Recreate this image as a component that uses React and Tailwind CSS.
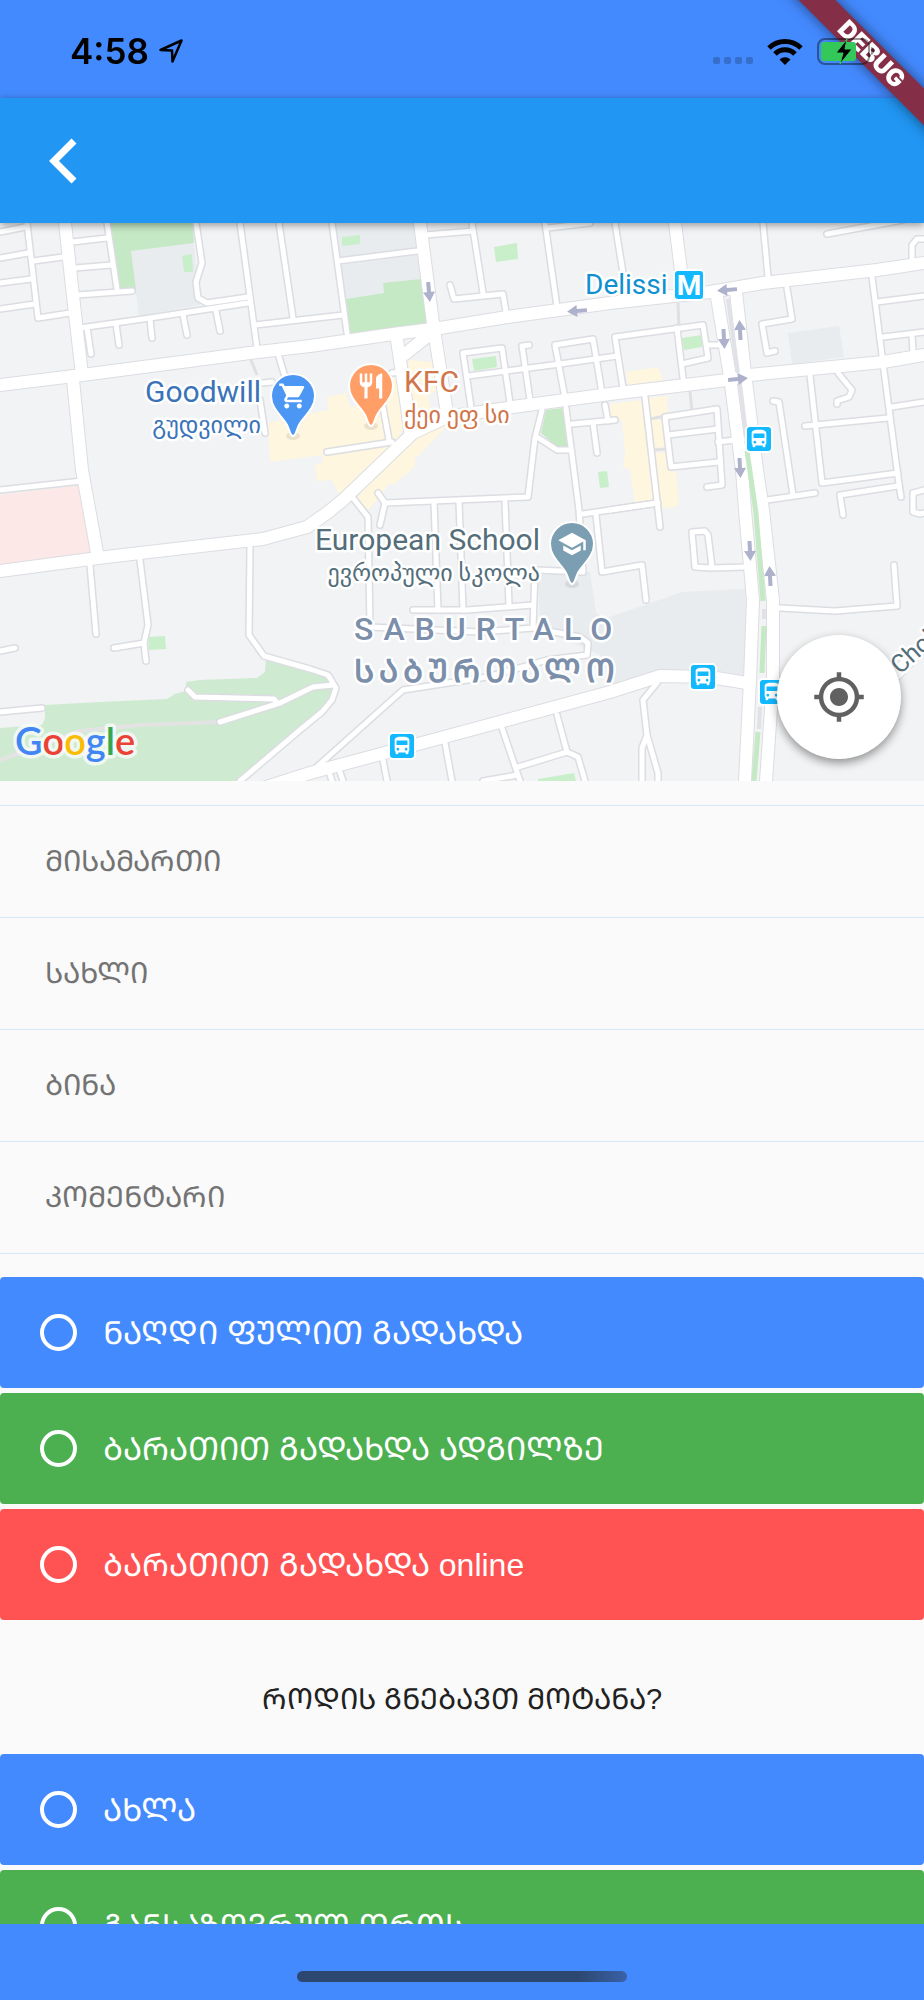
import React, { useState } from "react";
import { MdMyLocation, MdDirectionsBus, MdShoppingCart, MdRestaurant, MdSchool } from "react-icons/md";

const fields = [
  { name: "address", label: "ᲛᲘᲡᲐᲛᲐᲠᲗᲘ" },
  { name: "house", label: "ᲡᲐᲮᲚᲘ" },
  { name: "flat", label: "ᲑᲘᲜᲐ" },
  { name: "comment", label: "ᲙᲝᲛᲔᲜᲢᲐᲠᲘ" },
];

const payments = [
  { value: "cash", label: "ᲜᲐᲦᲓᲘ ᲤᲣᲚᲘᲗ ᲒᲐᲓᲐᲮᲓᲐ", color: "bg-[#448aff]" },
  { value: "card", label: "ᲑᲐᲠᲐᲗᲘᲗ ᲒᲐᲓᲐᲮᲓᲐ ᲐᲓᲒᲘᲚᲖᲔ", color: "bg-[#4caf50]" },
  { value: "online", label: "ᲑᲐᲠᲐᲗᲘᲗ ᲒᲐᲓᲐᲮᲓᲐ online", color: "bg-[#ff5252]" },
];

const times = [
  { value: "now", label: "ᲐᲮᲚᲐ", color: "bg-[#448aff]" },
  { value: "later", label: "ᲒᲐᲜᲡᲐᲖᲦᲕᲠᲣᲚ ᲓᲠᲝᲡ", color: "bg-[#4caf50]" },
];

// Map shapes
const campus = [
  "M131 28 194 20 196 45 200 82 139 93Z",
  "M332 0H417V27L338 37Z",
  "M340 42 418 32 422 56 383 61 384 70 346 76Z",
  "M788 110 839 103 844 134 792 141Z",
  "M538 352 590 349 596 390 602 395 610 394 682 369 745 366 749 452 655 449 612 464 600 432 540 405Z",
];

const parks = [
  "M108 0H193L194 20 131 28 136 67 118 66Z",
  "M346 76 384 70 383 60 421 56 428 101 350 111Z",
  "M546 187 563 185 568 224 557 224 541 210Z",
];

const lawns = [
  "M182 33 192 31 193 49 184 49Z",
  "M342 14 360 12V21L342 23Z",
  "M494 24 517 20 518 36 496 39Z",
  "M472 136 496 133 497 144 474 148Z",
  "M598 249 607 248 609 264 600 265Z",
  "M682 115 702 112V124L684 127Z",
  "M148 414 165 413 166 426 149 427Z",
  "M538 556 574 550 576 558H538Z",
];

const shops = [
  "M268 200 328 187 327 174 346 170 350 184 384 178 390 155 398 155 410 200 350 272 340 274 332 257 317 258 315 242 323 239 322 232 270 239Z",
  "M408 140 410 137 433 139 437 168 428 172 434 200 447 203 415 236 415 244 393 262 389 261 368 288 357 275 412 205Z",
  "M626 149 658 144 663 157 628 162Z",
  "M610 181 641 177 653 279 635 279 630 246 623 245 625 230 622 197 610 194Z",
  "M648 175 667 173 668 190 650 195Z",
  "M651 197 662 197 665 224 653 225Z",
  "M655 230 667 229 670 247 676 249 679 277 677 284 662 285Z",
];

const streets = [
  "M0 9 25 4",
  "M27 0 38 95 70 90",
  "M0 35 28 30",
  "M33 38 63 34",
  "M0 60 31 56",
  "M0 86 35 81",
  "M72 19 107 15",
  "M107 0 117 66",
  "M75 45 112 42",
  "M77 72 132 68",
  "M80 105 150 95 248 80",
  "M87 105 91 131",
  "M116 101 119 122",
  "M150 96 152 115",
  "M183 92 187 112",
  "M216 88 220 108",
  "M196 0 202 40 196 59 198 75 207 80 248 74",
  "M240 0 257 125",
  "M279 0 293 95",
  "M255 102 343 92",
  "M332 0 347 110",
  "M338 38 417 28",
  "M279 134 285 154",
  "M263 160 272 159",
  "M260 177 265 210",
  "M0 267 82 258",
  "M425 12 473 8",
  "M472 0 483 70",
  "M450 62 454 76 503 71 506 89",
  "M545 0 557 84",
  "M548 5 590 0",
  "M471 184 463 130 502 125 510 180",
  "M468 153 560 141 617 133",
  "M529 122 522 123 530 177",
  "M565 175 555 122 593 116 602 170",
  "M542 187 535 215 528 274 385 280 378 270",
  "M537 214 557 227 570 227",
  "M566 185 579 287 583 349 537 347",
  "M572 201 615 197",
  "M593 200 597 230",
  "M605 182 608 198",
  "M383 184 389 217",
  "M392 150 400 149",
  "M327 229 392 219",
  "M353 275 368 294 370 404 480 409 533 405 535 347",
  "M385 280 380 302",
  "M434 279 438 387",
  "M459 279 463 387",
  "M505 279 509 382",
  "M413 387 467 387 533 382",
  "M583 291 657 280",
  "M596 292 602 349 642 342 646 377",
  "M383 537 387 558",
  "M445 520 452 558",
  "M502 505 520 558",
  "M518 544 567 529 557 492",
  "M567 529 578 534 585 558",
  "M483 558 517 552",
  "M330 552 332 558",
  "M340 549 343 558",
  "M615 0 623 50",
  "M827 11 903 -3",
  "M912 35V22L917 16H924",
  "M787 65 792 96 762 101 767 130 775 128",
  "M872 54 883 140 898 254 901 274",
  "M877 79 924 73",
  "M883 114 924 109",
  "M912 112 913 129",
  "M892 184 924 179",
  "M810 152 822 260 898 250",
  "M805 203 888 195",
  "M838 150 852 167 849 174 837 178V181",
  "M773 178 779 179 793 272",
  "M767 277 815 270",
  "M898 263 840 272 843 292",
  "M924 267 913 270 913 289 920 291 924 290",
  "M623 165 615 114 703 102 708 135 682 141",
  "M677 105 683 155",
  "M708 122 720 122",
  "M645 174 660 304",
  "M610 287 658 280",
  "M718 239 671 244 665 194 717 186 722 262 707 264",
  "M668 212 718 206",
  "M718 219 743 216",
  "M763 0 768 54",
  "M90 342 96 411",
  "M140 337 148 402 144 420 146 438",
  "M114 425 144 420",
  "M0 428 15 425",
  "M0 489 42 485",
  "M250 324 249 412 264 433 310 446 328 452 336 465 332 477 322 489 300 507 240 558",
  "M188 467 195 474 274 476 277 480",
  "M220 499 280 480 313 464 333 462",
  "M745 344 712 345 695 344 692 309 705 308 708 312 712 344",
  "M780 385 835 388 897 383 894 342",
  "M657 460 643 477 647 512 642 525V558",
  "M647 512 658 550V558",
  "M310 550 403 467 487 454 547 437 587 432 588 420 580 414 533 405",
];

const avenues = [
  "M0 162 82 152 250 130 310 123 393 111 440 105 507 94 610 80 710 69 763 60 877 47 924 40",
  "M65 0 72 64 82 152",
  "M73 157 82 247 98 335",
  "M0 348 98 335 140 330 263 316 307 304 327 290 343 277 413 210 447 194 513 184 610 171 727 157 750 152 883 139 924 132",
  "M420 0 433 100 447 190",
  "M397 117 407 184 410 208",
  "M405 131 434 108",
  "M717 74 730 154 742 247 745 287 753 377 750 457 745 558",
  "M736 69 745 150 757 247 763 287 773 377 773 457 766 558",
  "M675 0 684 72",
  "M260 566 310 550 433 517 507 497 610 469 660 453 710 454 747 460",
  "M870 475 900 447 924 422",
];

const arrows = [
  [429, 69, 85],
  [577, 88, 175],
  [727, 67, 175],
  [724, 116, 87],
  [740, 107, -93],
  [738, 156, -6],
  [740, 245, 87],
  [750, 328, 87],
  [770, 353, -93],
];

const busStops = [
  [759, 216],
  [402, 523],
  [703, 454],
  [772, 469],
];

const Pin = ({ x, y, color, icon: Icon }) => (
  <g transform={`translate(${x} ${y})`}>
    <ellipse cx="0" cy="40" rx="7" ry="4" fill="#000" opacity="0.08" />
    <path
      d="M0 40C-3 40-3 35-6 29C-10 21-22 13-22 0A22 22 0 0 1 22 0C22 13 10 21 6 29C3 35 3 40 0 40Z"
      fill={color}
      stroke="#fff"
      strokeWidth="2"
    />
    <Icon x="-15" y="-15" size={30} color="#fff" />
  </g>
);

const StreetMap = () => (
  <svg
    viewBox="0 0 924 558"
    preserveAspectRatio="xMidYMid slice"
    className="block w-full h-[558px] bg-[#f1f3f4]"
    role="img"
    aria-label="Saburtalo"
  >
    <g>
      {campus.map((d) => <path key={d} d={d} fill="#e8ecef" />)}
      {parks.map((d) => <path key={d} d={d} fill="#c5e8c5" />)}
      {lawns.map((d) => <path key={d} d={d} fill="#c8efc9" />)}
      {shops.map((d) => <path key={d} d={d} fill="#fef6de" />)}
      <path d="M0 272 82 262 92 330 0 342Z" fill="#fce8e6" />
      <path
        d="M0 505 42 502 45 495V482L100 479 167 476 175 471 186 468V459L200 457 257 455 265 449 266 435 310 448 330 456 334 466 330 480 300 505 240 558H0Z"
        fill="#ceead0"
      />
      <path d="M0 537 80 508 140 502 220 499" fill="none" stroke="#e3e3e3" strokeWidth="4" />
      <path d="M251 137 257 152M678 80 679 105M690 168 692 190M650 196 665 193M653 227 668 226" stroke="#e0e0e0" strokeWidth="3" />
    </g>

    {/* casings first, then the road surface */}
    <g fill="none" stroke="#dcdde2" strokeLinejoin="round" strokeLinecap="round">
      {streets.map((d) => <path key={d} d={d} strokeWidth="8" />)}
      {avenues.map((d) => <path key={d} d={d} strokeWidth="14" />)}
    </g>
    <g fill="none" stroke="#fff" strokeLinejoin="round" strokeLinecap="round">
      {streets.map((d) => <path key={d} d={d} strokeWidth="5" />)}
      {avenues.map((d) => <path key={d} d={d} strokeWidth="12" />)}
    </g>

    {/* median */}
    <g fill="none" strokeWidth="4">
      <path d="M728 76 738 150M740 160 748 228M764 386V396M760 484 759 506" stroke="#e0e2e6" />
      <path d="M747 228 756 290 763 378M764 403 762 450M758 509 754 558" stroke="#c5e8c5" strokeWidth="5" />
    </g>

    {arrows.map(([x, y, angle]) => (
      <path
        key={`${x}-${y}`}
        d="M-10-2H0V-6L10 0 0 6V2H-10Z"
        fill="#adb1cc"
        transform={`translate(${x} ${y}) rotate(${angle})`}
      />
    ))}

    {busStops.map(([x, y]) => (
      <g key={`${x}-${y}`} transform={`translate(${x} ${y})`}>
        <rect x="-13" y="-13" width="26" height="26" rx="4" fill="#12b9ff" stroke="#fff" strokeWidth="2" />
        <MdDirectionsBus x="-11" y="-11" size={22} color="#fff" />
      </g>
    ))}

    <Pin x={293} y={173} color="#4c96f4" icon={MdShoppingCart} />
    <Pin x={371} y={163} color="#ff9e67" icon={MdRestaurant} />
    <Pin x={572} y={321} color="#7c9eb2" icon={MdSchool} />

    <g stroke="#fff" strokeWidth="5" strokeLinejoin="round" style={{ paintOrder: "stroke" }} fontFamily="Roboto, 'DejaVu Sans', sans-serif">
      <g fill="#3b73b9" textAnchor="end">
        <text x="261" y="179" fontSize="30">Goodwill</text>
        <text x="261" y="210" fontSize="24">გუდვილი</text>
      </g>
      <g fill="#d0764a">
        <text x="404" y="169" fontSize="30">KFC</text>
        <text x="404" y="200" fontSize="24">ქეი ეფ სი</text>
      </g>
      <g fill="#546e7a" textAnchor="end">
        <text x="540" y="327" fontSize="30">European School</text>
        <text x="540" y="358" fontSize="24">ევროპული სკოლა</text>
      </g>
      <g fill="#7b8eaa" fontWeight="500">
        <text x="354" y="417" fontSize="32" letterSpacing="10">SABURTALO</text>
        <text x="354" y="459" fontSize="32" letterSpacing="5" fontWeight="600">ᲡᲐᲑᲣᲠᲗᲐᲚᲝ</text>
      </g>
      <text x="585" y="71" fontSize="28" fill="#0f90d0">Delissi</text>
      <text x="900" y="452" fontSize="25" fill="#546e7a" transform="rotate(-42 900 452)">Chol</text>
    </g>

    <rect x="674" y="47" width="30" height="30" rx="4" fill="#12b9ff" stroke="#fff" strokeWidth="2" />
    <text x="689" y="72" fontSize="28" fontWeight="700" fill="#fff" textAnchor="middle" fontFamily="Roboto, sans-serif">M</text>

    <text
      x="15"
      y="532"
      fontSize="38"
      fontWeight="600"
      fontFamily="Lato, sans-serif"
      stroke="#fff"
      strokeOpacity="0.7"
      strokeWidth="7"
      strokeLinejoin="round"
      style={{ paintOrder: "stroke" }}
    >
      <tspan fill="#4285f4">G</tspan>
      <tspan fill="#ea4335">o</tspan>
      <tspan fill="#fbbc05">o</tspan>
      <tspan fill="#4285f4">g</tspan>
      <tspan fill="#34a853">l</tspan>
      <tspan fill="#ea4335">e</tspan>
    </text>
  </svg>
);

const StatusBar = () => (
  <div className="relative z-20 flex items-center h-[98px] pt-1 pl-[70px] pr-[50px] text-black shrink-0">
    <span className="font-['Inter'] font-semibold text-[35px] leading-[40px]">4:58</span>
    <svg viewBox="0 0 24 24" className="w-6 h-6 ml-[10px]" fill="none" stroke="currentColor" strokeWidth="2.5" strokeLinejoin="round">
      <path d="M1.500 11 22.500 1.500 13.500 22.500 13 11.500Z" />
    </svg>
    <div className="flex gap-1 ml-auto mt-[18px]">
      <span className="size-[7px] rounded-xs bg-black/20" />
      <span className="size-[7px] rounded-xs bg-black/20" />
      <span className="size-[7px] rounded-xs bg-black/20" />
      <span className="size-[7px] rounded-xs bg-black/20" />
    </div>
    <svg viewBox="0 0 36 27" className="w-9 h-[27px] ml-[14px]">
      <g fill="none" stroke="#000" strokeWidth="5">
        <path d="M2 10A23 23 0 0 1 34 10" />
        <path d="M8 16A14 14 0 0 1 28 16" />
      </g>
      <path d="M12.500 21.500A8 8 0 0 1 23.500 21.500L18 27Z" />
    </svg>
    <svg viewBox="0 0 58 28" className="w-[58px] h-7 ml-[13px]">
      <rect x="2" y="2" width="51" height="25" rx="7" fill="none" stroke="#000" strokeOpacity="0.4" strokeWidth="2" />
      <path d="M55 10C59 11 59 17 55 18Z" fill="#000" fillOpacity="0.4" />
      <rect x="5" y="5" width="35" height="19" rx="3" fill="#34c759" />
      <path d="M31 2 20 16H27L24 27 36 12H29Z" fill="#000" stroke="#34c759" strokeWidth="1" />
    </svg>
  </div>
);

const DebugBanner = () => (
  <div className="absolute top-0 right-0 z-10 w-[160px] h-[160px] overflow-hidden pointer-events-none">
    <div className="absolute -left-1 top-10 w-[220px] h-[26px] pl-1 rotate-45 bg-[#842e47] shadow-[0_0_14px_rgba(0,0,0,0.5)] text-center text-white font-['Inter'] font-black text-[24px] leading-[26px]">
      DEBUG
    </div>
  </div>
);

const OptionList = ({ name, options, value, onChange }) => (
  <div role="radiogroup" className="flex flex-col gap-[5px]">
    {options.map((option) => (
      <label
        key={option.value}
        className={`${option.color} flex items-center gap-[26px] h-[111px] pl-10 rounded-sm text-white text-[32px] leading-[40px]`}
      >
        <input
          type="radio"
          name={name}
          value={option.value}
          checked={value === option.value}
          onChange={() => onChange(option.value)}
          className="appearance-none size-[37px] rounded-full border-4 border-white checked:bg-white"
        />
        {option.label}
      </label>
    ))}
  </div>
);

const App = () => {
  const [payment, setPayment] = useState(null);
  const [time, setTime] = useState(null);

  return (
    <div className="relative flex flex-col h-screen overflow-hidden bg-[#448aff] font-['Liberation_Sans','DejaVu_Sans',sans-serif]">
      <StatusBar />
      <DebugBanner />

      <header className="relative z-5 flex items-center h-[125px] shrink-0 pl-[33px] bg-[#2196f3] shadow-[0_2px_8px_rgba(0,0,0,0.4)]">
        <button type="button" aria-label="Back" className="p-4">
          <svg viewBox="0 0 28 46" className="w-7 h-[46px]" fill="none" stroke="#fff" strokeWidth="7">
            <path d="M25 3 5 23 25 43" />
          </svg>
        </button>
      </header>

      <main className="flex-1 min-h-0 overflow-y-auto [scrollbar-width:none] bg-[#fafafa]">
        <div className="relative">
          <StreetMap />
          <button
            type="button"
            aria-label="My location"
            className="absolute right-[23px] bottom-[22px] flex items-center justify-center size-[124px] rounded-full bg-white text-[#616161] shadow-[0_4px_10px_rgba(0,0,0,0.4)]"
          >
            <MdMyLocation size={54} />
          </button>
        </div>

        <form>
          <div className="mt-6 mb-[23px] border-t border-[#d6e8fa]">
            {fields.map((field) => (
              <input
                key={field.name}
                name={field.name}
                aria-label={field.label}
                placeholder={field.label}
                className="block w-full h-28 px-[45px] border-b border-[#d6e8fa] text-[29px] text-gray-800 placeholder:text-[#737373] outline-none"
              />
            ))}
          </div>

          <OptionList name="payment" options={payments} value={payment} onChange={setPayment} />

          <h2 className="h-[134px] pt-[59px] text-center text-[29px] leading-[40px] text-[#212121]">
            ᲠᲝᲓᲘᲡ ᲒᲜᲔᲑᲐᲕᲗ ᲛᲝᲢᲐᲜᲐ?
          </h2>

          <OptionList name="time" options={times} value={time} onChange={setTime} />
        </form>
      </main>

      <footer className="flex justify-center items-end h-[76px] pb-[18px] shrink-0 bg-[#448aff]">
        <div className="w-[330px] h-[11px] rounded-full bg-linear-to-r from-[#2c4770] from-85% to-[#3a62a8]" />
      </footer>
    </div>
  );
};

export default App;
